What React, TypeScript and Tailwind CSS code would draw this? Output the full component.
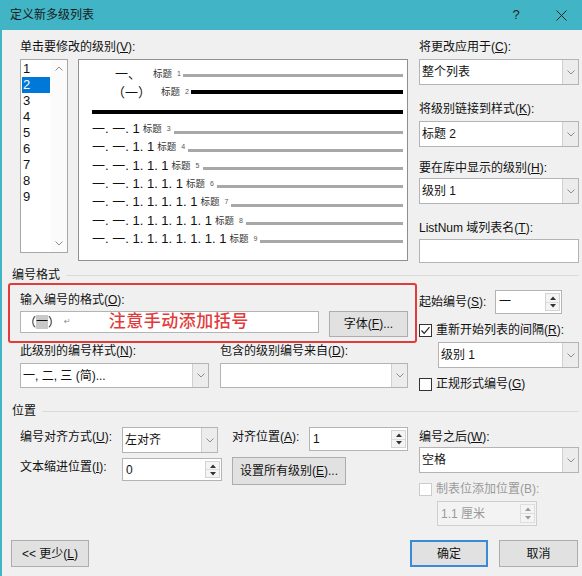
import type { ReactNode } from "react";

const FONT = "font-['Liberation_Sans','Noto_Sans_CJK_SC',sans-serif]";

function Label({ text, k, tail = ":", plain = false, className = "" }: { text: string; k: string; tail?: string; plain?: boolean; className?: string }) {
  return (
    <span className={`h-4 leading-4 text-[12px] whitespace-nowrap ${className}`}>
      {text}({plain ? k : <u>{k}</u>}){tail}
    </span>
  );
}

function Chevron({ up = false }: { up?: boolean }) {
  return (
    <svg width="8" height="5" viewBox="0 0 8 5">
      <polyline points={up ? "0.5,4.5 4,1 7.5,4.5" : "0.5,0.5 4,4 7.5,0.5"} fill="none" stroke="#8c8c8c" strokeWidth="1" />
    </svg>
  );
}

function Tri({ up = false, color = "#333" }: { up?: boolean; color?: string }) {
  return (
    <svg width="6" height="4" viewBox="0 0 6 4">
      <polygon points={up ? "0,4 3,0.5 6,4" : "0,0 3,3.5 6,0"} fill={color} />
    </svg>
  );
}

function Combo({ value, className = "" }: { value?: string; className?: string }) {
  return (
    <div className={`flex bg-white border border-[#b4b4b4] ${className}`}>
      <span className="flex-1 self-center pl-[2px] text-[12px] leading-4 whitespace-nowrap overflow-hidden">{value}</span>
      <span className="w-[16px] flex items-center justify-center bg-[#ececec] border-l border-[#d0d0d0]">
        <Chevron />
      </span>
    </div>
  );
}

function Spin({ value, disabled = false, className = "" }: { value: string; disabled?: boolean; className?: string }) {
  return (
    <div className={`flex border ${disabled ? "border-[#cfcfcf] bg-[#f3f3f3] text-[#999]" : "border-[#b4b4b4] bg-white"} ${className}`}>
      <span className="flex-1 self-center pl-[3px] text-[12px] leading-4 whitespace-nowrap">{value}</span>
      <span className={`w-[15px] my-[2px] mr-[1px] flex flex-col border ${disabled ? "border-[#dedede]" : "border-[#d4d4d4]"} bg-[#f4f4f4]`}>
        <span className="flex-1 flex items-center justify-center border-b border-[#dcdcdc]">
          <Tri up color={disabled ? "#9a9a9a" : "#333"} />
        </span>
        <span className="flex-1 flex items-center justify-center">
          <Tri color={disabled ? "#9a9a9a" : "#333"} />
        </span>
      </span>
    </div>
  );
}

function Btn({ children, primary = false, className = "" }: { children: ReactNode; primary?: boolean; className?: string }) {
  return (
    <div className={`flex items-center justify-center bg-[#e1e1e1] text-[12px] leading-4 whitespace-nowrap ${primary ? "border-2 border-[#3c8ad6]" : "border border-[#adadad]"} ${className}`}>
      {children}
    </div>
  );
}

function Check({ checked = false, disabled = false }: { checked?: boolean; disabled?: boolean }) {
  return (
    <span className={`w-[13px] h-[13px] shrink-0 bg-white border ${disabled ? "border-[#cccccc]" : "border-[#333]"} flex items-center justify-center`}>
      {checked && (
        <svg width="11" height="11" viewBox="0 0 11 11">
          <polyline points="1.5,5.5 4.2,8.3 9.5,2.2" fill="none" stroke="#222" strokeWidth="1.2" />
        </svg>
      )}
    </span>
  );
}

function Heading({ text, className = "" }: { text: string; className?: string }) {
  return (
    <div className={`h-4 flex items-center pl-[4px] ${className}`}>
      <span className="text-[12px] leading-4">{text}</span>
      <span className="flex-1 h-px ml-[6px] bg-[#dadada]" />
    </div>
  );
}

function LevelList() {
  const levels = [1, 2, 3, 4, 5, 6, 7, 8, 9];
  return (
    <div className="w-[48px] h-[194px] shrink-0 flex bg-white border border-[#a7a7a7]">
      <div className="flex-1 flex flex-col pt-[1px]">
        {levels.map((n) => (
          <div
            key={n}
            className={`ml-[1px] w-[28px] h-[16px] pl-[1px] text-[13px] leading-4 ${n === 2 ? "bg-[#0078d7] text-white" : ""}`}>
            {n}
          </div>
        ))}
      </div>
      <div className="w-[16px] flex flex-col items-center justify-between py-[6px] bg-[#fbfbfb]">
        <Chevron up />
        <Chevron />
      </div>
    </div>
  );
}

function Tag({ n, className = "" }: { n: number; className?: string }) {
  return (
    <>
      <span className={`text-[9.5px] leading-3 text-[#333] ${className}`}>标题</span>
      <span className="ml-[5px] text-[7px] leading-3 text-[#555]">{n}</span>
    </>
  );
}

function Preview() {
  const deep = [3, 4, 5, 6, 7, 8, 9];
  return (
    <div className="w-[330px] h-[202px] shrink-0 flex flex-col pt-[5px] pr-[4px] bg-white border border-[#8f8f8f]">
      <div className="h-[18.3px] flex items-center pl-[36px]">
        <span className="text-[13px] leading-4">一、</span>
        <Tag n={1} className="ml-[12px]" />
        <span className="flex-1 h-[3px] ml-[2px] translate-y-[1px] bg-[#a8a8a8]" />
      </div>
      <div className="h-[18.3px] flex items-center pl-[33px]">
        <span className="text-[13px] leading-4 font-['Noto_Sans_CJK_SC',sans-serif]">（一）</span>
        <Tag n={2} className="ml-[10px]" />
        <span className="flex-1 h-[4px] ml-[2px] bg-black" />
      </div>
      <div className="h-[18.3px] flex items-center pl-[13px]">
        <span className="flex-1 h-[4px] translate-y-[1px] bg-black" />
      </div>
      {deep.map((n) => (
        <div key={n} className="h-[18.3px] flex items-center pl-[13px]">
          <span className="text-[13px] leading-4 whitespace-pre">
            {"一. 一. " + Array(n - 2).fill("1").join(". ")}
          </span>
          <Tag n={n} className="ml-[3px]" />
          <span className="flex-1 h-[3px] ml-[3px] translate-y-[3px] bg-[#a8a8a8]" />
        </div>
      ))}
    </div>
  );
}

export default function App() {
  return (
    <div className={`w-[582px] h-[576px] flex flex-col overflow-hidden bg-[#f0f0f0] text-[#111] ${FONT}`}>
      <div className="h-[30px] shrink-0 flex items-center bg-[#41b5c5] text-[12px] text-[#1a1a1a]">
        <span className="pl-[10px] text-[#1a1a1a]">定义新多级列表</span>
        <span className="ml-auto mr-[25px] w-[20px] text-center text-[13px] text-[#222]">?</span>
        <span className="mr-[11px] w-[20px] flex justify-center">
          <svg width="11" height="11" viewBox="0 0 11 11">
            <path d="M0.5 0.5 L10.5 10.5 M10.5 0.5 L0.5 10.5" stroke="#222" strokeWidth="1" />
          </svg>
        </span>
      </div>

      <div className="flex-1 flex flex-col pt-[9px] pl-[6px] pr-[3px] border-l-2 border-[#41b5c5]">
        {/* levels + preview + link settings */}
        <div className="flex pl-[12px]">
          <div className="w-[388px] flex flex-col">
            <Label text="单击要修改的级别" k="V" />
            <div className="mt-[4px] flex items-start gap-[10px]">
              <LevelList />
              <Preview />
            </div>
          </div>
          <div className="ml-[11px] w-[160px] flex flex-col">
            <Label text="将更改应用于" k="C" />
            <Combo value="整个列表" className="mt-[4px] h-[26px]" />
            <Label text="将级别链接到样式" k="K" className="mt-[16px]" />
            <Combo value="标题 2" className="mt-[4px] h-[26px]" />
            <Label text="要在库中显示的级别" k="H" className="mt-[13px]" />
            <Combo value="级别 1" className="mt-[2px] h-[26px]" />
            <Label text="ListNum 域列表名" k="T" className="mt-[16px]" />
            <div className="mt-[3px] h-[24px] bg-white border border-[#b4b4b4]" />
          </div>
        </div>

        <Heading text="编号格式" className="mt-[4px]" />

        <div className="flex">
          <div className="w-[409px] flex flex-col">
            <div className="h-[60px] flex flex-col pt-[7px] pl-[10px] border-2 border-[#e23b3b] rounded-[3px]">
              <Label text="输入编号的格式" k="O" />
              <div className="mt-[3px] flex items-start">
                <div className="w-[299px] h-[22px] flex items-center pl-[3px] bg-white border border-[#b4b4b4] text-[12px]">
                  <span className="font-['Noto_Sans_CJK_SC',sans-serif]">（</span>
                  <span className="h-[14px] leading-[14px] bg-[#c8c8c8]">一</span>
                  <span className="font-['Noto_Sans_CJK_SC',sans-serif]">）</span>
                  <span className="ml-[4px] text-[8px] text-[#888] font-['DejaVu_Sans',sans-serif]">↵</span>
                  <span className="ml-[38px] text-[17px] leading-5 font-medium text-[#e23b3b] tracking-[0.5px]">注意手动添加括号</span>
                </div>
                <Btn className="ml-[10px] w-[79px] h-[26px]">
                  字体(<u>F</u>)...
                </Btn>
              </div>
            </div>
            <div className="flex gap-[11px] pl-[12px]">
              <div className="w-[189px] flex flex-col">
                <Label text="此级别的编号样式" k="N" />
                <Combo value="一, 二, 三 (简)..." className="mt-[4px] h-[25px]" />
              </div>
              <div className="w-[188px] flex flex-col">
                <Label text="包含的级别编号来自" k="D" />
                <Combo className="mt-[4px] h-[25px]" />
              </div>
            </div>
          </div>
          <div className="ml-[2px] w-[160px] flex flex-col pt-[7px]">
            <div className="h-[24px] flex items-center">
              <Label text="起始编号" k="S" className="w-[76px]" />
              <Spin value="一" className="w-[67px] h-[24px]" />
            </div>
            <div className="mt-[8px] h-4 flex items-center gap-[4px]">
              <Check checked />
              <Label text="重新开始列表的间隔" k="R" />
            </div>
            <Combo value="级别 1" className="mt-[4px] ml-[19px] h-[26px]" />
            <div className="mt-[8px] h-4 flex items-center gap-[4px]">
              <Check />
              <Label text="正规形式编号" k="G" tail="" />
            </div>
          </div>
        </div>

        <Heading text="位置" className="mt-[11px]" />

        <div className="flex">
          <div className="w-[409px] flex flex-col pt-[8px] pl-[12px]">
            <div className="flex items-start">
              <Label text="编号对齐方式" k="U" className="mt-[2px] w-[102px]" />
              <Combo value="左对齐" className="w-[96px] h-[26px]" />
              <Label text="对齐位置" k="A" className="mt-[2px] ml-[14px] w-[77px]" />
              <Spin value="1" className="w-[99px] h-[24px]" />
            </div>
            <div className="mt-[4px] flex items-start">
              <Label text="文本缩进位置" k="I" className="mt-[2px] w-[102px]" />
              <Spin value="0" className="mt-[1px] w-[100px] h-[23px]" />
              <Btn className="ml-[10px] w-[114px] h-[28px]">
                设置所有级别(<u>E</u>)...
              </Btn>
            </div>
          </div>
          <div className="ml-[2px] w-[160px] flex flex-col pt-[10px]">
            <Label text="编号之后" k="W" />
            <Combo value="空格" className="mt-[2px] h-[26px]" />
            <div className="mt-[8px] h-4 flex items-center gap-[4px] text-[#9a9a9a]">
              <Check disabled />
              <Label text="制表位添加位置" k="B" plain />
            </div>
            <Spin value="1.1 厘米" disabled className="mt-[4px] ml-[18px] w-[100px] h-[25px]" />
          </div>
        </div>

        <div className="mt-[14px] flex">
          <Btn className="ml-[3px] w-[78px] h-[27px]">
            {"<< 更少("}
            <u>L</u>)
          </Btn>
          <Btn primary className="ml-auto w-[78px] h-[27px]">
            确定
          </Btn>
          <Btn className="ml-[11px] mr-[1px] w-[79px] h-[27px]">取消</Btn>
        </div>
      </div>
    </div>
  );
}
